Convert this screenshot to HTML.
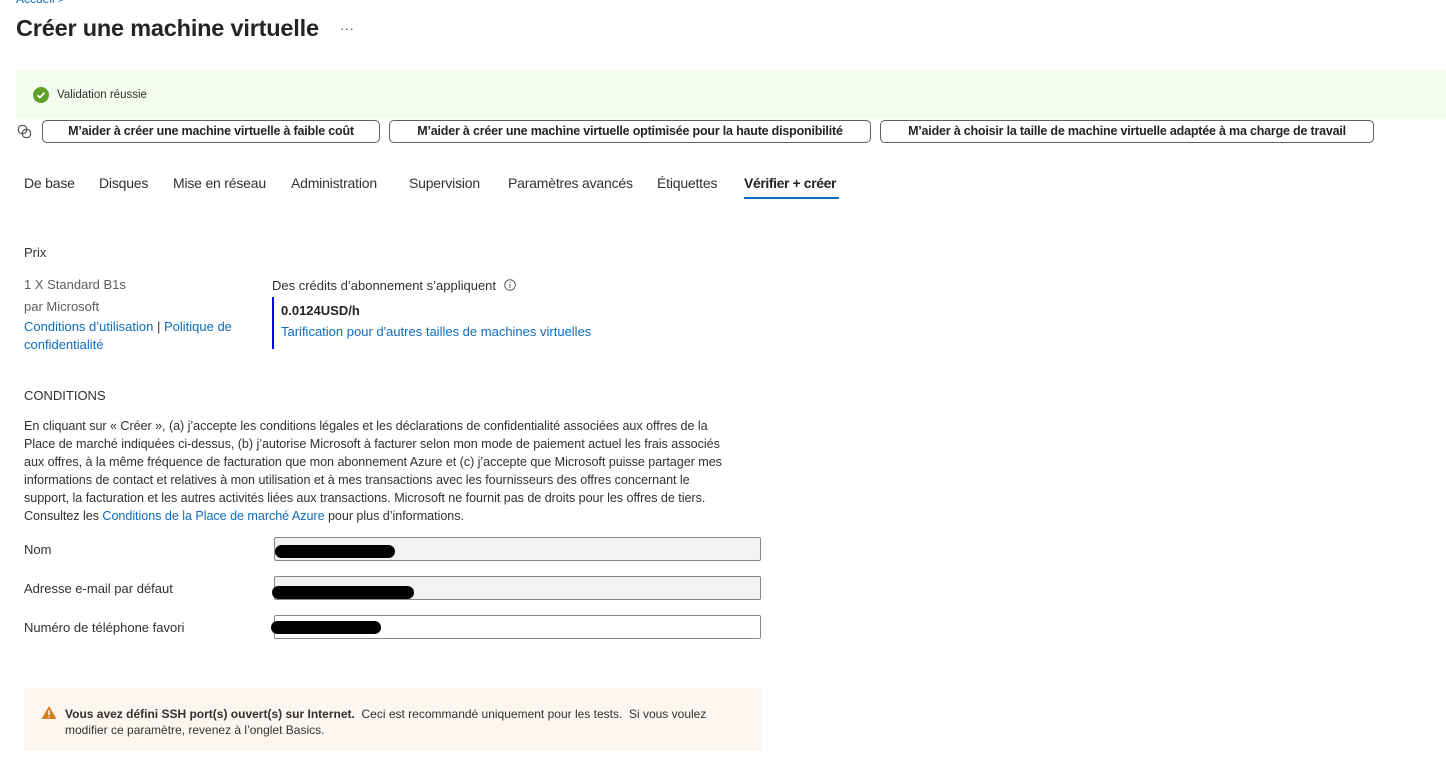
<!DOCTYPE html>
<html><head><meta charset="utf-8"><style>
body{margin:0;width:1446px;height:763px;background:#fff;font-family:"Liberation Sans",sans-serif;color:#323130;position:relative;overflow:hidden;font-size:13px}
.a{position:absolute;white-space:nowrap}
.l{color:#0f6cbd}
.btn{position:absolute;top:120px;height:21px;border:1px solid #605e5c;border-radius:5px;font-size:12.5px;font-weight:bold;line-height:21px;text-align:center;color:#242424;letter-spacing:-0.2px}
.tab{position:absolute;top:175px;font-size:14px;color:#323130;letter-spacing:-0.2px}
.inp{position:absolute;left:274px;width:485px;height:22px;border:1px solid #8a8886;border-radius:2px;background:#f3f2f1}
.blk{position:absolute;height:13px;background:#000;border-radius:7px}
</style></head><body>
<div class="a l" style="left:16px;top:-8px;font-size:12px">Accueil &gt;</div>
<div class="a" style="left:16px;top:15px;font-size:23.5px;font-weight:bold;color:#242424;letter-spacing:-0.2px">Créer une machine virtuelle</div>
<div class="a" style="left:340px;top:20px;font-size:14px;color:#605e5c">···</div>
<div class="a" style="left:16px;top:70px;width:1430px;height:49px;background:#f4fbef"></div>
<svg class="a" style="left:33px;top:87px" width="16" height="16"><circle cx="8" cy="8" r="8" fill="#5ea127"/><path d="M4.5 8.3l2.3 2.3 4.7-4.8" stroke="#fff" stroke-width="1.8" fill="none"/></svg>
<div class="a" style="left:57px;top:89px;font-size:11.5px">Validation réussie</div>
<svg class="a" style="left:17px;top:124px" width="15" height="15"><rect x="1.5" y="1.5" width="8" height="8" rx="3" fill="none" stroke="#555" stroke-width="1.2"/><rect x="5.5" y="5.5" width="8" height="8" rx="3" fill="none" stroke="#555" stroke-width="1.2"/></svg>
<div class="btn" style="left:42px;width:336px">M’aider à créer une machine virtuelle à faible coût</div>
<div class="btn" style="left:389px;width:480px">M’aider à créer une machine virtuelle optimisée pour la haute disponibilité</div>
<div class="btn" style="left:880px;width:492px">M’aider à choisir la taille de machine virtuelle adaptée à ma charge de travail</div>
<div class="tab" style="left:24px">De base</div>
<div class="tab" style="left:99px">Disques</div>
<div class="tab" style="left:173px">Mise en réseau</div>
<div class="tab" style="left:291px">Administration</div>
<div class="tab" style="left:409px">Supervision</div>
<div class="tab" style="left:508px">Paramètres avancés</div>
<div class="tab" style="left:657px">Étiquettes</div>
<div class="tab" style="left:744px;font-weight:bold;color:#242424;letter-spacing:-0.4px">Vérifier + créer</div>
<div class="a" style="left:744px;top:197px;width:95px;height:2px;background:#0f6cbd"></div>
<div class="a" style="left:24px;top:245px">Prix</div>
<div class="a" style="left:24px;top:277px;color:#605e5c">1 X Standard B1s</div>
<div class="a" style="left:24px;top:299px;color:#605e5c">par Microsoft</div>
<div class="a" style="left:24px;top:318px;line-height:18px;white-space:normal;width:240px"><span class="l">Conditions d’utilisation</span> | <span class="l">Politique de confidentialité</span></div>
<div class="a" style="left:272px;top:278px">Des crédits d’abonnement s’appliquent</div>
<svg class="a" style="left:504px;top:279px" width="12" height="12"><circle cx="6" cy="6" r="5.3" fill="none" stroke="#605e5c"/><path d="M6 5v4M6 3v1" stroke="#605e5c"/></svg>
<div class="a" style="left:272px;top:297px;width:2px;height:52px;background:#0000ff"></div>
<div class="a" style="left:281px;top:303px;font-weight:bold;color:#242424">0.0124USD/h</div>
<div class="a l" style="left:281px;top:324px">Tarification pour d'autres tailles de machines virtuelles</div>
<div class="a" style="left:24px;top:388px">CONDITIONS</div>
<div class="a" style="left:24px;top:417px;line-height:18px;font-size:12.6px;letter-spacing:-0.05px">En cliquant sur « Créer », (a) j’accepte les conditions légales et les déclarations de confidentialité associées aux offres de la<br>Place de marché indiquées ci-dessus, (b) j’autorise Microsoft à facturer selon mon mode de paiement actuel les frais associés<br>aux offres, à la même fréquence de facturation que mon abonnement Azure et (c) j’accepte que Microsoft puisse partager mes<br>informations de contact et relatives à mon utilisation et à mes transactions avec les fournisseurs des offres concernant le<br>support, la facturation et les autres activités liées aux transactions. Microsoft ne fournit pas de droits pour les offres de tiers.<br>Consultez les <span class="l">Conditions de la Place de marché Azure</span> pour plus d’informations.</div>
<div class="a" style="left:24px;top:542px">Nom</div>
<div class="a" style="left:24px;top:581px">Adresse e-mail par défaut</div>
<div class="a" style="left:24px;top:620px">Numéro de téléphone favori</div>
<div class="inp" style="top:537px"></div>
<div class="inp" style="top:576px"></div>
<div class="inp" style="top:615px;background:#fff"></div>
<div class="blk" style="left:275px;top:545px;width:120px"></div>
<div class="blk" style="left:272px;top:586px;width:142px"></div>
<div class="blk" style="left:271px;top:621px;width:110px"></div>
<div class="a" style="left:24px;top:688px;width:737px;height:63px;background:#fdf6f0"></div>
<svg class="a" style="left:41px;top:705px" width="16" height="15"><path d="M8 1L15.5 14H0.5Z" fill="#d67f1a"/><path d="M8 5.5v4.5M8 11.5v1.3" stroke="#fff" stroke-width="1.5"/></svg>
<div class="a" style="left:65px;top:706px;font-size:12px;line-height:16px;letter-spacing:0px"><b>Vous avez défini SSH port(s) ouvert(s) sur Internet.</b>&nbsp; Ceci est recommandé uniquement pour les tests.&nbsp; Si vous voulez<br>modifier ce paramètre, revenez à l’onglet Basics.</div>
</body></html>
